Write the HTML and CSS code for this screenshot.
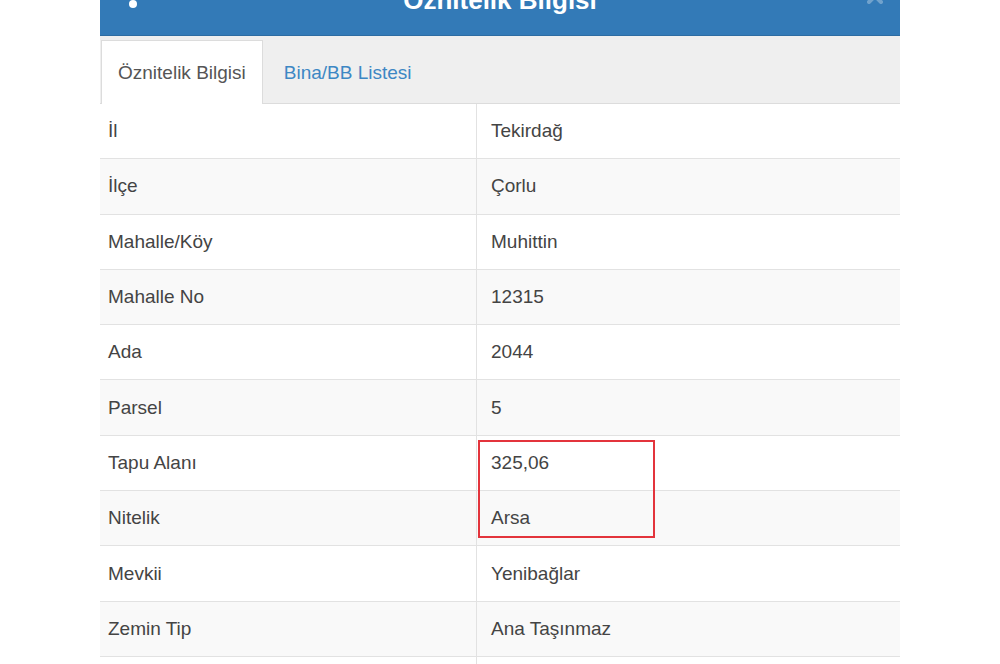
FILE: index.html
```html
<!DOCTYPE html>
<html lang="tr">
<head>
<meta charset="utf-8">
<title>Öznitelik Bilgisi</title>
<link rel="stylesheet" href="styles.css">
</head>
<body>
<div class="panel">
  <div class="modal-header">
    <span class="header-icon">
      <svg width="10" height="10" viewBox="0 0 10 10"><circle cx="5" cy="5" r="4" fill="#fff"/></svg>
    </span>
    <h4 class="modal-title">Öznitelik Bilgisi</h4>
    <span class="close">
      <svg width="16" height="16" viewBox="0 0 16 16"><path d="M2 2 L14 14 M14 2 L2 14" stroke="#fff" stroke-width="4" stroke-linecap="round"/></svg>
    </span>
  </div>
  <div class="tabs">
    <div class="tab active">Öznitelik Bilgisi</div>
    <div class="tab">Bina/BB Listesi</div>
  </div>
  <div class="table-wrap">
    <div class="row"><div class="cell label">İl</div><div class="cell value">Tekirdağ</div></div>
    <div class="row"><div class="cell label">İlçe</div><div class="cell value">Çorlu</div></div>
    <div class="row"><div class="cell label">Mahalle/Köy</div><div class="cell value">Muhittin</div></div>
    <div class="row"><div class="cell label">Mahalle No</div><div class="cell value">12315</div></div>
    <div class="row"><div class="cell label">Ada</div><div class="cell value">2044</div></div>
    <div class="row"><div class="cell label">Parsel</div><div class="cell value">5</div></div>
    <div class="row"><div class="cell label">Tapu Alanı</div><div class="cell value">325,06</div></div>
    <div class="row"><div class="cell label">Nitelik</div><div class="cell value">Arsa</div></div>
    <div class="row"><div class="cell label">Mevkii</div><div class="cell value">Yenibağlar</div></div>
    <div class="row"><div class="cell label">Zemin Tip</div><div class="cell value">Ana Taşınmaz</div></div>
    <div class="row"><div class="cell label"></div><div class="cell value"></div></div>
    <div class="highlight"></div>
  </div>
</div>
</body>
</html>
```

FILE: styles.css
```css
html, body {
  margin: 0;
  padding: 0;
  background: #ffffff;
  overflow: hidden;
}

body {
  font-family: "Liberation Sans", Arial, sans-serif;
  color: #444;
}

.panel {
  width: 800px;
  margin: -34px auto 0;
}

.modal-header {
  position: relative;
  height: 69px;
  background: #337ab7;
  border-bottom: 1px solid #2d6ca2;
  display: flex;
  justify-content: center;
  align-items: flex-start;
}

.modal-title {
  margin: 0;
  padding-top: 19px;
  font-size: 26px;
  font-weight: bold;
  color: #ffffff;
  line-height: 30px;
}

.header-icon {
  position: absolute;
  left: 28px;
  top: 33px;
  width: 10px;
  height: 10px;
  display: block;
}

.header-icon svg, .close svg {
  display: block;
}

.close {
  position: absolute;
  right: 17px;
  top: 22px;
  opacity: 0.3;
}

.tabs {
  display: flex;
  align-items: flex-end;
  height: 67px;
  background: #efefef;
  border-bottom: 1px solid #dcdcdc;
}

.tab {
  height: 63px;
  padding: 0 16px;
  margin-bottom: -1px;
  margin-right: 4px;
  display: flex;
  align-items: center;
  font-size: 19px;
  color: #3d87c4;
  border: 1px solid transparent;
  border-bottom: none;
  box-sizing: border-box;
}

.tab.active {
  margin-left: 1px;
  height: 64px;
  background: #ffffff;
  color: #555;
  border-color: #dcdcdc;
}

.table-wrap {
  position: relative;
}

.row {
  display: grid;
  grid-template-columns: 377px 1fr;
  height: 55.3px;
  box-sizing: border-box;
  border-bottom: 1px solid #e2e2e2;
  font-size: 19px;
}

.row:nth-child(even) {
  background: #f9f9f9;
}

.cell {
  display: flex;
  align-items: center;
  color: #444;
}

.label {
  padding-left: 8px;
  border-right: 1px solid #e2e2e2;
}

.value {
  padding-left: 14px;
}

.highlight {
  position: absolute;
  left: 378px;
  top: 336px;
  width: 177px;
  height: 98px;
  border: 2px solid #e3343c;
  box-sizing: border-box;
}
```
